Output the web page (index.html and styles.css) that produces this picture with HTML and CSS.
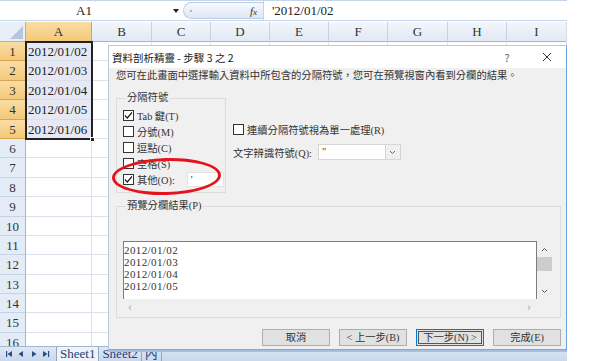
FILE: index.html
```html
<!DOCTYPE html>
<html>

<head>
    <meta charset="utf-8" />
    <title>資料剖析精靈</title>
    <link rel="stylesheet" href="styles.css">
</head>

<body>

<div class="app">
    <!-- 資料編輯列 -->
    <div class="formula-bar">
        <div class="name-box">A1</div>
        <div class="name-drop"><span class="tri"></span></div>
        <div class="fx-pill"><span class="pill-dot"></span><span class="fx">f<i>x</i></span></div>
        <div class="formula">'2012/01/02</div>
    </div>

    <!-- 工作表 -->
    <div class="sheet">
        <div class="corner"><span class="corner-tri"></span></div>
        <div class="ch on">A</div><div class="ch">B</div><div class="ch">C</div><div class="ch">D</div><div class="ch">E</div><div class="ch">F</div><div class="ch">G</div><div class="ch">H</div><div class="ch">I</div>

        <div class="rh on">1</div><div class="c sel">2012/01/02</div><div class="c"></div><div class="c"></div><div class="c"></div><div class="c"></div><div class="c"></div><div class="c"></div><div class="c"></div><div class="c"></div>
        <div class="rh on">2</div><div class="c sel">2012/01/03</div><div class="c"></div><div class="c"></div><div class="c"></div><div class="c"></div><div class="c"></div><div class="c"></div><div class="c"></div><div class="c"></div>
        <div class="rh on">3</div><div class="c sel">2012/01/04</div><div class="c"></div><div class="c"></div><div class="c"></div><div class="c"></div><div class="c"></div><div class="c"></div><div class="c"></div><div class="c"></div>
        <div class="rh on">4</div><div class="c sel">2012/01/05</div><div class="c"></div><div class="c"></div><div class="c"></div><div class="c"></div><div class="c"></div><div class="c"></div><div class="c"></div><div class="c"></div>
        <div class="rh on">5</div><div class="c sel">2012/01/06</div><div class="c"></div><div class="c"></div><div class="c"></div><div class="c"></div><div class="c"></div><div class="c"></div><div class="c"></div><div class="c"></div>
        <div class="rh">6</div><div class="c"></div><div class="c"></div><div class="c"></div><div class="c"></div><div class="c"></div><div class="c"></div><div class="c"></div><div class="c"></div><div class="c"></div>
        <div class="rh">7</div><div class="c"></div><div class="c"></div><div class="c"></div><div class="c"></div><div class="c"></div><div class="c"></div><div class="c"></div><div class="c"></div><div class="c"></div>
        <div class="rh">8</div><div class="c"></div><div class="c"></div><div class="c"></div><div class="c"></div><div class="c"></div><div class="c"></div><div class="c"></div><div class="c"></div><div class="c"></div>
        <div class="rh">9</div><div class="c"></div><div class="c"></div><div class="c"></div><div class="c"></div><div class="c"></div><div class="c"></div><div class="c"></div><div class="c"></div><div class="c"></div>
        <div class="rh">10</div><div class="c"></div><div class="c"></div><div class="c"></div><div class="c"></div><div class="c"></div><div class="c"></div><div class="c"></div><div class="c"></div><div class="c"></div>
        <div class="rh">11</div><div class="c"></div><div class="c"></div><div class="c"></div><div class="c"></div><div class="c"></div><div class="c"></div><div class="c"></div><div class="c"></div><div class="c"></div>
        <div class="rh">12</div><div class="c"></div><div class="c"></div><div class="c"></div><div class="c"></div><div class="c"></div><div class="c"></div><div class="c"></div><div class="c"></div><div class="c"></div>
        <div class="rh">13</div><div class="c"></div><div class="c"></div><div class="c"></div><div class="c"></div><div class="c"></div><div class="c"></div><div class="c"></div><div class="c"></div><div class="c"></div>
        <div class="rh">14</div><div class="c"></div><div class="c"></div><div class="c"></div><div class="c"></div><div class="c"></div><div class="c"></div><div class="c"></div><div class="c"></div><div class="c"></div>
        <div class="rh">15</div><div class="c"></div><div class="c"></div><div class="c"></div><div class="c"></div><div class="c"></div><div class="c"></div><div class="c"></div><div class="c"></div><div class="c"></div>
        <div class="rh">16</div><div class="c"></div><div class="c"></div><div class="c"></div><div class="c"></div><div class="c"></div><div class="c"></div><div class="c"></div><div class="c"></div><div class="c"></div>
    </div>

    <!-- 工作表索引標籤 -->
    <div class="tabs">
        <div class="tab-nav">
            <svg width="46" height="8" viewBox="0 0 46 8">
                <rect x="1" y="1" width="1.2" height="6" fill="#2b4c86"/>
                <polygon points="7,1 2.5,4 7,7" fill="#2b4c86"/>
                <polygon points="18,1 13.5,4 18,7" fill="#2b4c86"/>
                <polygon points="27,1 31.5,4 27,7" fill="#2b4c86"/>
                <polygon points="38,1 42.5,4 38,7" fill="#2b4c86"/>
                <rect x="43" y="1" width="1.2" height="6" fill="#2b4c86"/>
            </svg>
        </div>
        <div class="tab cur">Sheet1</div>
        <div class="tab">Sheet2</div>
        <div class="tab">內</div>
        <div class="tab-new"></div>
    </div>

    <div class="selection"><span class="handle"></span></div>

    <!-- 資料剖析精靈 -->
    <div class="dialog">
        <div class="titlebar">
            <span class="title">資料剖析精靈 - 步驟 3 之 2</span>
            <span class="help">?</span>
            <span class="close"><svg width="10" height="10" viewBox="0 0 10 10"><path d="M1,1 L9,9 M9,1 L1,9" stroke="#333" stroke-width="1"/></svg></span>
        </div>
        <div class="dlg-body">
            <div class="desc">您可在此畫面中選擇輸入資料中所包含的分隔符號，您可在預覽視窗內看到分欄的結果。</div>

            <div class="upper">
                <fieldset class="group delims">
                    <legend>分隔符號</legend>
                    <div class="opt"><span class="box checked"><svg width="11" height="11" viewBox="0 0 11 11"><polyline points="2,5.5 4.3,8 9,2.5" fill="none" stroke="#222" stroke-width="1.2"/></svg></span>Tab 鍵(T)</div>
                    <div class="opt"><span class="box"></span>分號(M)</div>
                    <div class="opt"><span class="box"></span>逗點(C)</div>
                    <div class="opt"><span class="box"></span>空格(S)</div>
                    <div class="opt"><span class="box checked"><svg width="11" height="11" viewBox="0 0 11 11"><polyline points="2,5.5 4.3,8 9,2.5" fill="none" stroke="#222" stroke-width="1.2"/></svg></span>其他(O):<span class="other-input">'</span></div>
                </fieldset>

                <div class="side">
                    <div class="opt"><span class="box"></span>連續分隔符號視為單一處理(R)</div>
                    <div class="qualifier">
                        <span>文字辨識符號(Q):</span>
                        <span class="combo">
                            <span class="combo-val">"</span>
                            <span class="combo-btn"><svg width="7" height="5" viewBox="0 0 7 5"><polyline points="1,1 3.5,3.5 6,1" fill="none" stroke="#666" stroke-width="1"/></svg></span>
                        </span>
                    </div>
                </div>
            </div>

            <fieldset class="group preview">
                <legend>預覽分欄結果(P)</legend>
                <div class="pv-main">
                    <div class="pv-text">2012/01/02<br>2012/01/03<br>2012/01/04<br>2012/01/05</div>
                    <div class="vscroll">
                        <span class="arr"><svg width="7" height="5" viewBox="0 0 7 5"><polyline points="1,4 3.5,1.5 6,4" fill="none" stroke="#555" stroke-width="1"/></svg></span>
                        <span class="thumb"></span>
                        <span class="arr down"><svg width="7" height="5" viewBox="0 0 7 5"><polyline points="1,1 3.5,3.5 6,1" fill="none" stroke="#555" stroke-width="1"/></svg></span>
                    </div>
                </div>
                <div class="hscroll"><span>&lsaquo;</span><span>&rsaquo;</span></div>
            </fieldset>

            <div class="buttons">
                <span class="btn">取消</span>
                <span class="btn">&lt; 上一步(B)</span>
                <span class="btn focus">下一步(N) &gt;</span>
                <span class="btn">完成(E)</span>
            </div>
        </div>
    </div>

    <div class="circle"></div>
</div>

</body>

</html>
```

FILE: styles.css
```css
* {
    padding: 0;
    margin: 0;
    box-sizing: border-box;
}

body {
    background: #fff;
}

.app {
    width: 600px;
    height: 361px;
    position: relative;
    overflow: hidden;
    font-family: "Liberation Serif", "Noto Sans CJK TC", serif;
    color: #222;
}

/* 資料編輯列 */
.formula-bar {
    width: 567px;
    height: 21px;
    margin-bottom: 1px;
    display: flex;
    border-top: 1px solid #c6d6ea;
    border-bottom: 1px solid #c6d6ea;
    font-size: 13px;
}

.name-box {
    width: 168px;
    text-align: center;
    line-height: 19px;
}

.name-drop {
    width: 15px;
    display: flex;
    align-items: center;
    justify-content: center;
}

.name-drop .tri {
    border-left: 3.5px solid transparent;
    border-right: 3.5px solid transparent;
    border-top: 4px solid #222;
}

.fx-pill {
    width: 80px;
    margin: 1px 0 1px 0;
    border: 1px solid #bccde3;
    border-right: 0;
    border-radius: 9px 0 0 9px;
    background: linear-gradient(#f7f9fc, #dde7f3);
    display: flex;
    align-items: center;
    justify-content: space-between;
    padding: 0 6px 0 6px;
}

.pill-dot {
    width: 2px;
    height: 2px;
    background: #aab8ca;
}

.fx {
    font-style: italic;
    font-size: 11px;
    color: #333;
}

.fx i {
    font-size: 9px;
}

.formula {
    flex: 1;
    padding-left: 8px;
    line-height: 19px;
    border-left: 1px solid #c6d6ea;
}

/* 工作表 */
.sheet {
    width: 567px;
    height: 324px;
    overflow: hidden;
    display: grid;
    grid-template-columns: 26px 66px 60px 59px 59px 59px 59px 60px 59px 60px;
    grid-template-rows: 20px repeat(16, 19.4px);
    font-size: 13px;
    border-right: 1px solid #d5dde8;
}

.corner {
    background: #e9eff7;
    border-right: 1px solid #9eb6ce;
    border-bottom: 1px solid #9eb6ce;
    position: relative;
}

.corner-tri {
    position: absolute;
    right: 2px;
    bottom: 2px;
    border-left: 13px solid transparent;
    border-bottom: 13px solid #b4c6dd;
}

.ch {
    background: linear-gradient(#f3f6fb, #e1e9f4);
    border-right: 1px solid #c5d3e4;
    border-bottom: 1px solid #9eb6ce;
    text-align: center;
    line-height: 20px;
    color: #333;
}

.rh {
    background: #e4ecf7;
    border-right: 1px solid #9eb6ce;
    border-bottom: 1px solid #c5d3e4;
    text-align: center;
    line-height: 19px;
    color: #333;
}

.ch.on,
.rh.on {
    background: linear-gradient(#f9dda6, #f4c979);
    border-color: #d9a44f;
}

.c {
    border-right: 1px solid #dbe1ea;
    border-bottom: 1px solid #dbe1ea;
    line-height: 19px;
    padding-left: 2px;
}

.c.sel {
    background: #e6e9f4;
}

.selection {
    position: absolute;
    left: 25px;
    top: 41px;
    width: 68px;
    height: 99px;
    border: 2px solid #222;
}

.selection .handle {
    position: absolute;
    right: -4px;
    bottom: -4px;
    width: 5px;
    height: 5px;
    background: #222;
    border: 1px solid #fff;
}

/* 工作表索引標籤 */
.tabs {
    width: 567px;
    height: 15px;
    display: flex;
    align-items: stretch;
    background: linear-gradient(#dfe8f4, #c9d8ec);
    border-top: 1px solid #9eb6ce;
    font-size: 13px;
    color: #1e3f78;
}

.tab-nav {
    width: 56px;
    display: flex;
    align-items: center;
    padding-left: 5px;
}

.tab {
    padding: 0 3px;
    line-height: 14px;
    border-right: 1px solid #8ea7c6;
}

.tab.cur {
    background: #eef3fa;
    border-left: 1px solid #8ea7c6;
}

.tab-new {
    width: 14px;
}

/* 對話方塊 */
.dialog {
    position: absolute;
    left: 108px;
    top: 45px;
    width: 459px;
    height: 305px;
    background: #f0f0f0;
    border: 1px solid #b9c9dd;
    border-right-color: #6fa1d9;
    border-bottom-color: #7ea8da;
    box-shadow: 0 2px 0 #a4bfe3;
    display: flex;
    flex-direction: column;
    font-size: 10.3px;
    color: #1a1a1a;
}

.titlebar {
    height: 22px;
    background: #fff;
    display: flex;
    align-items: center;
    padding-left: 3px;
    font-family: "Noto Sans CJK TC", sans-serif;
    font-size: 10.5px;
}

.help {
    margin-left: auto;
    width: 12px;
    text-align: center;
    color: #555;
}

.close {
    width: 12px;
    height: 10px;
    margin: 0 13px 0 28px;
    display: flex;
    justify-content: center;
}

.dlg-body {
    flex: 1;
    padding: 0 5px 0 7px;
    display: flex;
    flex-direction: column;
}

.desc {
    margin-top: 2px;
    line-height: 12px;
    color: #333;
}

.upper {
    margin-top: 10px;
    display: flex;
}

.group {
    border: 1px solid #dcdcdc;
    min-width: 0;
}

.group legend {
    margin-left: 3px;
    padding: 0 1px;
    line-height: 12px;
    color: #333;
}

.delims {
    width: 110px;
    height: 101px;
    padding: 3px 0 0 6px;
}

.opt {
    height: 16px;
    display: flex;
    align-items: center;
    gap: 3px;
    color: #333;
}

.box {
    width: 11px;
    height: 11px;
    border: 1px solid #333;
    background: #fff;
    display: flex;
}

.box svg {
    margin: -1px;
}

.other-input {
    width: 37px;
    height: 15px;
    margin-left: 9px;
    background: #fff;
    border: 1px solid #e3e3e3;
    padding-left: 3px;
    line-height: 13px;
}

.side {
    margin-left: 7px;
    padding-top: 29px;
}

.qualifier {
    margin-top: 7px;
    display: flex;
    align-items: center;
    color: #333;
}

.combo {
    width: 83px;
    height: 16px;
    margin-left: 6px;
    display: flex;
    background: #fff;
    border: 1px solid #d6d6d6;
}

.combo-val {
    flex: 1;
    padding-left: 3px;
    line-height: 14px;
}

.combo-btn {
    width: 15px;
    border-left: 1px solid #d6d6d6;
    background: #f0f0f0;
    display: flex;
    align-items: center;
    justify-content: center;
}

.preview {
    margin-top: 7px;
    height: 118px;
    padding: 29px 0 0 6px;
}

.pv-main {
    display: flex;
    height: 58px;
}

.pv-text {
    width: 414px;
    background: #fff;
    border: 1px solid #7d7d7d;
    border-bottom: 0;
    padding: 2px 0 0 0;
    font-size: 11px;
    line-height: 12px;
    letter-spacing: 0.4px;
    color: #333;
}

.vscroll {
    width: 15px;
    display: flex;
    flex-direction: column;
}

.vscroll .arr {
    height: 16px;
    display: flex;
    align-items: center;
    justify-content: center;
}

.vscroll .thumb {
    height: 14px;
    background: #cdcdcd;
}

.vscroll .down {
    margin-top: auto;
}

.hscroll {
    width: 414px;
    height: 15px;
    display: flex;
    justify-content: space-between;
    padding: 0 6px 0 5px;
    font-size: 12px;
    line-height: 14px;
    color: #a6a6a6;
}

.buttons {
    margin-top: 11px;
    display: flex;
    justify-content: flex-end;
    gap: 9px;
}

.btn {
    width: 68px;
    height: 17px;
    background: #e1e1e1;
    border: 1px solid #adadad;
    text-align: center;
    line-height: 15px;
    color: #333;
}

.btn.focus {
    border-color: #0078d7;
    box-shadow: inset 0 0 0 1px #e1e1e1, inset 0 0 0 2px #555;
}

/* 標註用紅圈 */
.circle {
    position: absolute;
    left: 112px;
    top: 158px;
    width: 109px;
    height: 37px;
    border: 3.5px solid #e3141c;
    border-radius: 50%;
    transform: rotate(-1.5deg);
}
```
